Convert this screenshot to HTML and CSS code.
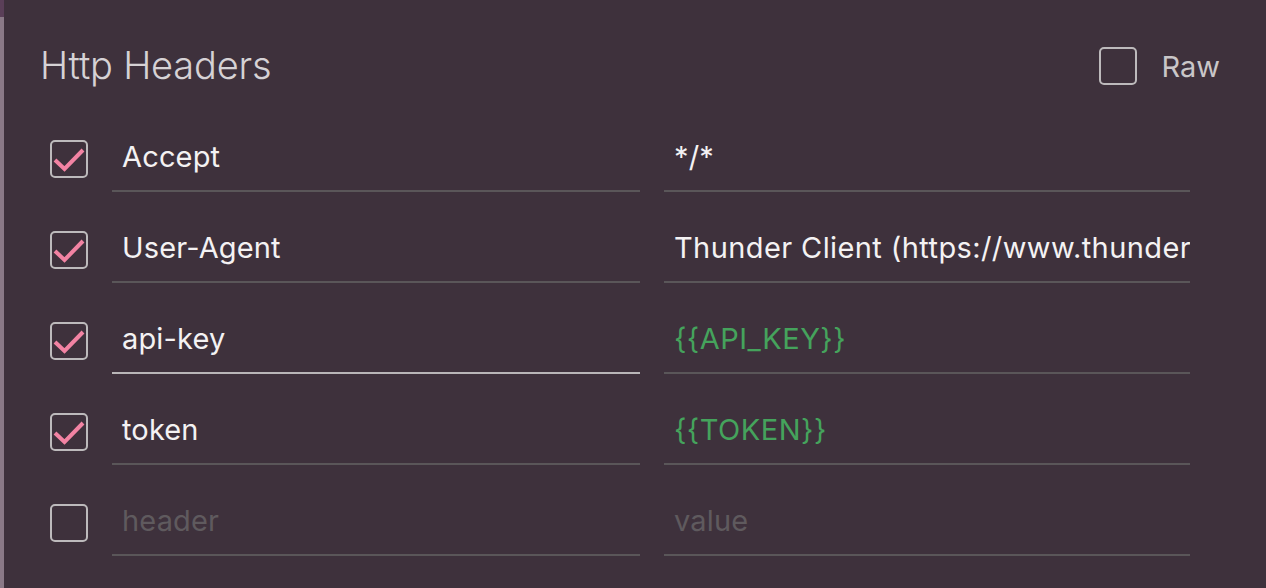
FILE: index.html
```html
<!DOCTYPE html>
<html>
<head>
<meta charset="utf-8">
<link rel="stylesheet" href="styles.css">
</head>
<body>
<div class="frame">
  <div class="rail"><div class="rail-top"></div><div class="rail-bottom"></div></div>
  <div class="panel">
    <div class="head">
      <h1 class="title">Http Headers</h1>
      <label class="raw"><span class="box"></span><span class="raw-label">Raw</span></label>
    </div>
    <div class="rows">
      <div class="row">
        <span class="box checked"><svg viewBox="0 0 34 34"><path d="M3 18 L12.5 27 L31 8"/></svg></span>
        <div class="field key"><span class="txt">Accept</span></div>
        <div class="field val"><span class="txt">*/*</span></div>
      </div>
      <div class="row">
        <span class="box checked"><svg viewBox="0 0 34 34"><path d="M3 18 L12.5 27 L31 8"/></svg></span>
        <div class="field key"><span class="txt">User-Agent</span></div>
        <div class="field val"><span class="txt wide">Thunder Client (https://www.thunderclient.com)</span></div>
      </div>
      <div class="row">
        <span class="box checked"><svg viewBox="0 0 34 34"><path d="M3 18 L12.5 27 L31 8"/></svg></span>
        <div class="field key focus"><span class="txt">api-key</span></div>
        <div class="field val"><span class="txt var">{{API_KEY}}</span></div>
      </div>
      <div class="row">
        <span class="box checked"><svg viewBox="0 0 34 34"><path d="M3 18 L12.5 27 L31 8"/></svg></span>
        <div class="field key"><span class="txt">token</span></div>
        <div class="field val"><span class="txt var">{{TOKEN}}</span></div>
      </div>
      <div class="row">
        <span class="box"></span>
        <div class="field key"><span class="txt ph">header</span></div>
        <div class="field val"><span class="txt ph">value</span></div>
      </div>
    </div>
  </div>
</div>
</body>
</html>
```
FILE: styles.css
```css
html, body {
  margin: 0;
  padding: 0;
  background: #3e313c;
}
body {
  width: 1266px;
  height: 588px;
  overflow: hidden;
  font-family: "Inter", "Noto Sans", sans-serif;
}
.frame {
  display: flex;
  height: 588px;
}
.rail {
  width: 4px;
  display: flex;
  flex-direction: column;
}
.rail-top {
  height: 17px;
  background: #5a3f58;
}
.rail-bottom {
  flex: 1;
  background: #8a7987;
}
.panel {
  flex: 1;
  padding: 0 76px 0 36px;
}
.head {
  display: flex;
  align-items: center;
  justify-content: space-between;
  height: 132px;
}
.title {
  margin: 0;
  font-weight: 300;
  font-size: 38px;
  color: #d6d2d5;
  letter-spacing: -0.2px;
  position: relative;
  top: -1px;
}
.raw {
  display: flex;
  align-items: center;
  gap: 24px;
  margin-right: -30px;
}
.raw-label {
  font-size: 29px;
  color: #c9c6c8;
}
.box {
  display: block;
  box-sizing: border-box;
  width: 38px;
  height: 38px;
  border: 2px solid #bdbabc;
  border-radius: 5px;
  flex: none;
}
.box svg {
  display: block;
  width: 34px;
  height: 34px;
}
.box svg path {
  fill: none;
  stroke: #f283a3;
  stroke-width: 4;
  stroke-linecap: butt;
  stroke-linejoin: miter;
}
.rows {
  display: flex;
  flex-direction: column;
  gap: 31px;
  padding-left: 10px;
}
.row {
  display: flex;
  align-items: flex-start;
  gap: 24px;
}
.row > .box {
  margin-top: 8px;
}
.field {
  box-sizing: border-box;
  height: 60px;
  border-bottom: 2px solid #5a5659;
  display: flex;
  align-items: center;
  padding: 0 0 10px 10px;
  overflow: hidden;
  white-space: nowrap;
}
.field.key { width: 528px; }
.field.val { width: 526px; }
.field.focus { border-bottom-color: #b9b6b8; }
.txt {
  font-size: 29px;
  color: #f4f2f3;
  letter-spacing: 0.15px;
}
.txt.wide { letter-spacing: 0.4px; }
.txt.var { color: #45a35c; letter-spacing: 0.5px; }
.txt.ph { color: #5f5a5e; }
```
